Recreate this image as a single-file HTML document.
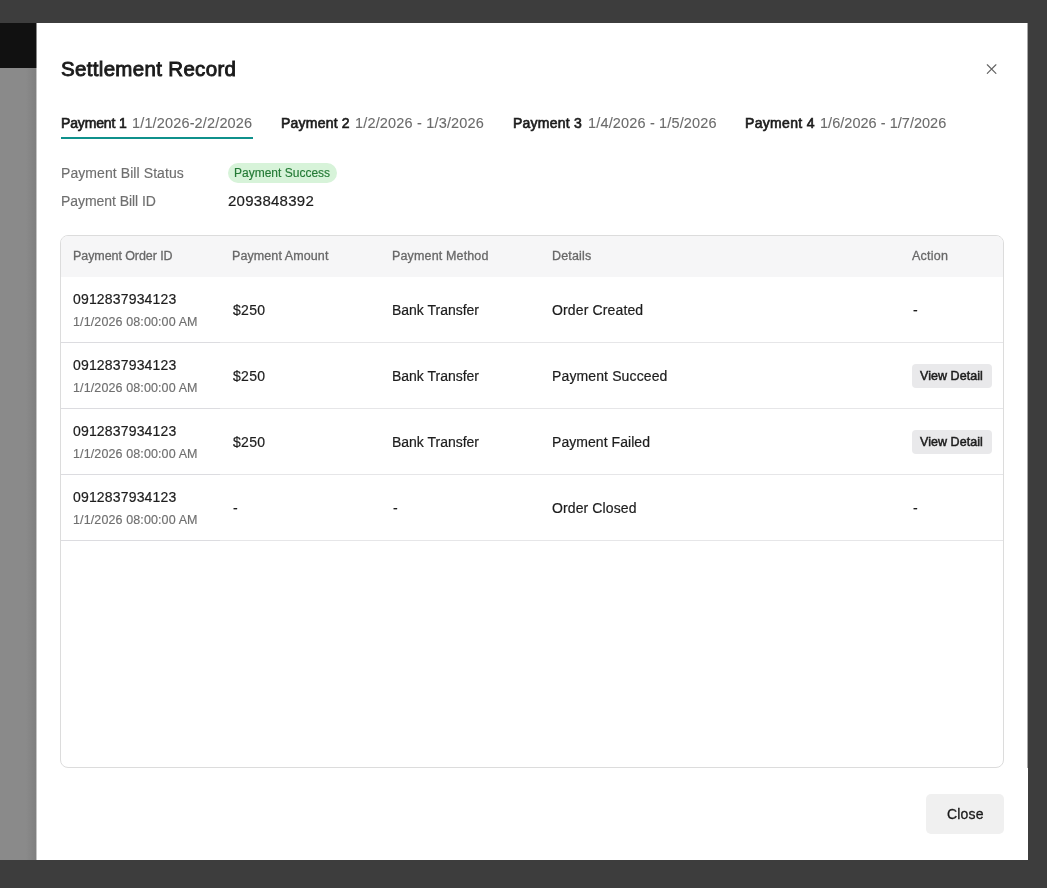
<!DOCTYPE html>
<html><head><meta charset="utf-8">
<style>
html,body{margin:0;padding:0;}
body{width:1047px;height:888px;position:relative;overflow:hidden;background:#3d3d3d;font-family:"Liberation Sans",sans-serif;}
.blk{position:absolute;left:0;top:23px;width:37px;height:45px;background:#111111;}
.gry{position:absolute;left:0;top:68px;width:37px;height:792px;background:linear-gradient(90deg,#8a8a8a 0,#8a8a8a 70%,#7e7e7e 100%);}
.modal{position:absolute;left:37px;top:23px;width:991px;height:837px;background:#ffffff;}
.t{position:absolute;white-space:nowrap;will-change:transform;}
.uline{position:absolute;left:60.5px;top:137.2px;width:192.7px;height:2.3px;background:#0f918c;}
.badge{position:absolute;left:228px;top:163px;width:109px;height:20px;border-radius:10px;background:#d7f3d9;}
.table{position:absolute;left:60px;top:235px;width:944px;height:533px;box-sizing:border-box;border:1px solid #dcdcdc;border-radius:8px;overflow:hidden;}
.thead{position:absolute;left:0;top:0;width:100%;height:41px;background:#f6f6f7;}
.div{position:absolute;left:61px;width:942px;height:1.3px;background:#e6e6e8;}
.div2{position:absolute;left:61px;width:159px;height:1.3px;background:#dcdce0;}
.vbtn{position:absolute;left:912px;width:80px;height:24px;border-radius:4px;background:#e9e9eb;}
.cbtn{position:absolute;left:926px;top:794px;width:78px;height:40px;border-radius:5px;background:#f0f0f0;}
.x{position:absolute;left:984px;top:61px;width:15px;height:15px;}
.edgeL{position:absolute;left:36px;top:23px;width:1px;height:837px;background:linear-gradient(#888 0,#888 45px,#c4c4c4 45px);}
.edgeR{position:absolute;left:1027px;top:23px;width:1px;height:745px;background:#a8a8a8;}
</style></head><body>
<div class="blk"></div><div class="gry"></div>
<div class="modal"></div><div class="edgeL"></div><div class="edgeR"></div>
<svg class="x" viewBox="0 0 15 15"><path d="M3.3 3.75 L11.9 12.35 M11.9 3.75 L3.3 12.35" stroke="#636363" stroke-width="1.15" stroke-linecap="round"/></svg>
<div class="uline"></div>
<div class="badge"></div>
<div class="table"><div class="thead"></div></div>
<div class="div" style="top:342px"></div><div class="div2" style="top:342px"></div><div class="div" style="top:408px"></div><div class="div2" style="top:408px"></div><div class="div" style="top:474px"></div><div class="div2" style="top:474px"></div><div class="div" style="top:540px"></div><div class="div2" style="top:540px"></div>
<div class="cbtn"></div>
<div class="t" id="t0" style="left:61.05px;top:59px;font-size:20.5px;line-height:20.5px;letter-spacing:0.324px;color:#1a1a1a;font-weight:400;-webkit-text-stroke:0.9px #1a1a1a;">Settlement Record</div><div class="t" id="t1" style="left:60.96px;top:116px;font-size:14px;line-height:14px;letter-spacing:-0.151px;color:#1c1c1c;font-weight:400;-webkit-text-stroke:0.65px #1c1c1c;">Payment 1</div><div class="t" id="t2" style="left:131.57px;top:116px;font-size:14.5px;line-height:14.5px;letter-spacing:0.149px;color:#6b6b6b;font-weight:400;-webkit-text-stroke:0.1px #6b6b6b;">1/1/2026-2/2/2026</div><div class="t" id="t3" style="left:281.46px;top:116px;font-size:14px;line-height:14px;letter-spacing:0.216px;color:#1c1c1c;font-weight:400;-webkit-text-stroke:0.65px #1c1c1c;">Payment 2</div><div class="t" id="t4" style="left:355.13px;top:116px;font-size:14.5px;line-height:14.5px;letter-spacing:0.171px;color:#6b6b6b;font-weight:400;-webkit-text-stroke:0.1px #6b6b6b;">1/2/2026 - 1/3/2026</div><div class="t" id="t5" style="left:513.08px;top:116px;font-size:14px;line-height:14px;letter-spacing:0.231px;color:#1c1c1c;font-weight:400;-webkit-text-stroke:0.65px #1c1c1c;">Payment 3</div><div class="t" id="t6" style="left:587.51px;top:116px;font-size:14.5px;line-height:14.5px;letter-spacing:0.157px;color:#6b6b6b;font-weight:400;-webkit-text-stroke:0.1px #6b6b6b;">1/4/2026 - 1/5/2026</div><div class="t" id="t7" style="left:745.08px;top:116px;font-size:14px;line-height:14px;letter-spacing:0.319px;color:#1c1c1c;font-weight:400;-webkit-text-stroke:0.65px #1c1c1c;">Payment 4</div><div class="t" id="t8" style="left:819.69px;top:116px;font-size:14.5px;line-height:14.5px;letter-spacing:0.028px;color:#6b6b6b;font-weight:400;-webkit-text-stroke:0.1px #6b6b6b;">1/6/2026 - 1/7/2026</div><div class="t" id="t9" style="left:60.59px;top:166px;font-size:14px;line-height:14px;letter-spacing:0.078px;color:#6f6f6f;font-weight:400;-webkit-text-stroke:0.15px #6f6f6f;">Payment Bill Status</div><div class="t" id="t10" style="left:60.59px;top:194px;font-size:14px;line-height:14px;letter-spacing:-0.053px;color:#6f6f6f;font-weight:400;-webkit-text-stroke:0.15px #6f6f6f;">Payment Bill ID</div><div class="t" id="t11" style="left:234.42px;top:167px;font-size:12px;line-height:12px;letter-spacing:0.005px;color:#247a35;font-weight:400;-webkit-text-stroke:0.15px #247a35;">Payment Success</div><div class="t" id="t12" style="left:228.49px;top:193px;font-size:15px;line-height:15px;letter-spacing:0.260px;color:#1d1d1d;font-weight:400;-webkit-text-stroke:0.2px #1d1d1d;">2093848392</div><div class="t" id="t13" style="left:72.52px;top:250px;font-size:12.5px;line-height:12.5px;letter-spacing:-0.076px;color:#686868;font-weight:400;-webkit-text-stroke:0.3px #686868;">Payment Order ID</div><div class="t" id="t14" style="left:232.02px;top:250px;font-size:12.5px;line-height:12.5px;letter-spacing:0.090px;color:#686868;font-weight:400;-webkit-text-stroke:0.3px #686868;">Payment Amount</div><div class="t" id="t15" style="left:392.08px;top:250px;font-size:12.5px;line-height:12.5px;letter-spacing:0.148px;color:#686868;font-weight:400;-webkit-text-stroke:0.3px #686868;">Payment Method</div><div class="t" id="t16" style="left:551.58px;top:250px;font-size:12.5px;line-height:12.5px;letter-spacing:0.179px;color:#686868;font-weight:400;-webkit-text-stroke:0.3px #686868;">Details</div><div class="t" id="t17" style="left:912.26px;top:250px;font-size:12.5px;line-height:12.5px;letter-spacing:0.247px;color:#686868;font-weight:400;-webkit-text-stroke:0.3px #686868;">Action</div><div class="t" id="t18" style="left:72.89px;top:292px;font-size:14px;line-height:14px;letter-spacing:0.168px;color:#1d1d1d;font-weight:400;-webkit-text-stroke:0.2px #1d1d1d;">0912837934123</div><div class="t" id="t19" style="left:72.58px;top:316px;font-size:12.5px;line-height:12.5px;letter-spacing:0.115px;color:#6f6f6f;font-weight:400;-webkit-text-stroke:0.15px #6f6f6f;">1/1/2026 08:00:00 AM</div><div class="t" id="t20" style="left:232.94px;top:303px;font-size:14px;line-height:14px;letter-spacing:0.338px;color:#1d1d1d;font-weight:400;-webkit-text-stroke:0.2px #1d1d1d;">$250</div><div class="t" id="t21" style="left:392.05px;top:303px;font-size:14px;line-height:14px;letter-spacing:-0.012px;color:#1d1d1d;font-weight:400;-webkit-text-stroke:0.2px #1d1d1d;">Bank Transfer</div><div class="t" id="t22" style="left:552.12px;top:303px;font-size:14px;line-height:14px;letter-spacing:0.137px;color:#1d1d1d;font-weight:400;-webkit-text-stroke:0.2px #1d1d1d;">Order Created</div><div class="t" id="t23" style="left:913.10px;top:303px;font-size:14px;line-height:14px;letter-spacing:0.000px;color:#1d1d1d;font-weight:400;-webkit-text-stroke:0.2px #1d1d1d;">-</div><div class="t" id="t24" style="left:72.89px;top:358px;font-size:14px;line-height:14px;letter-spacing:0.168px;color:#1d1d1d;font-weight:400;-webkit-text-stroke:0.2px #1d1d1d;">0912837934123</div><div class="t" id="t25" style="left:72.58px;top:382px;font-size:12.5px;line-height:12.5px;letter-spacing:0.115px;color:#6f6f6f;font-weight:400;-webkit-text-stroke:0.15px #6f6f6f;">1/1/2026 08:00:00 AM</div><div class="t" id="t26" style="left:232.94px;top:369px;font-size:14px;line-height:14px;letter-spacing:0.338px;color:#1d1d1d;font-weight:400;-webkit-text-stroke:0.2px #1d1d1d;">$250</div><div class="t" id="t27" style="left:392.05px;top:369px;font-size:14px;line-height:14px;letter-spacing:-0.012px;color:#1d1d1d;font-weight:400;-webkit-text-stroke:0.2px #1d1d1d;">Bank Transfer</div><div class="t" id="t28" style="left:551.94px;top:369px;font-size:14px;line-height:14px;letter-spacing:0.127px;color:#1d1d1d;font-weight:400;-webkit-text-stroke:0.2px #1d1d1d;">Payment Succeed</div><div class="vbtn" style="top:364px"></div><div class="t" id="t29" style="left:920.36px;top:370px;font-size:12.5px;line-height:12.5px;letter-spacing:0.050px;color:#1c1c1c;font-weight:400;-webkit-text-stroke:0.5px #1c1c1c;">View Detail</div><div class="t" id="t30" style="left:72.89px;top:424px;font-size:14px;line-height:14px;letter-spacing:0.168px;color:#1d1d1d;font-weight:400;-webkit-text-stroke:0.2px #1d1d1d;">0912837934123</div><div class="t" id="t31" style="left:72.58px;top:448px;font-size:12.5px;line-height:12.5px;letter-spacing:0.115px;color:#6f6f6f;font-weight:400;-webkit-text-stroke:0.15px #6f6f6f;">1/1/2026 08:00:00 AM</div><div class="t" id="t32" style="left:232.94px;top:435px;font-size:14px;line-height:14px;letter-spacing:0.338px;color:#1d1d1d;font-weight:400;-webkit-text-stroke:0.2px #1d1d1d;">$250</div><div class="t" id="t33" style="left:392.05px;top:435px;font-size:14px;line-height:14px;letter-spacing:-0.012px;color:#1d1d1d;font-weight:400;-webkit-text-stroke:0.2px #1d1d1d;">Bank Transfer</div><div class="t" id="t34" style="left:551.94px;top:435px;font-size:14px;line-height:14px;letter-spacing:0.053px;color:#1d1d1d;font-weight:400;-webkit-text-stroke:0.2px #1d1d1d;">Payment Failed</div><div class="vbtn" style="top:430px"></div><div class="t" id="t35" style="left:920.36px;top:436px;font-size:12.5px;line-height:12.5px;letter-spacing:0.050px;color:#1c1c1c;font-weight:400;-webkit-text-stroke:0.5px #1c1c1c;">View Detail</div><div class="t" id="t36" style="left:72.89px;top:490px;font-size:14px;line-height:14px;letter-spacing:0.168px;color:#1d1d1d;font-weight:400;-webkit-text-stroke:0.2px #1d1d1d;">0912837934123</div><div class="t" id="t37" style="left:72.58px;top:514px;font-size:12.5px;line-height:12.5px;letter-spacing:0.115px;color:#6f6f6f;font-weight:400;-webkit-text-stroke:0.15px #6f6f6f;">1/1/2026 08:00:00 AM</div><div class="t" id="t38" style="left:233.10px;top:501px;font-size:14px;line-height:14px;letter-spacing:0.000px;color:#1d1d1d;font-weight:400;-webkit-text-stroke:0.2px #1d1d1d;">-</div><div class="t" id="t39" style="left:393.10px;top:501px;font-size:14px;line-height:14px;letter-spacing:0.000px;color:#1d1d1d;font-weight:400;-webkit-text-stroke:0.2px #1d1d1d;">-</div><div class="t" id="t40" style="left:552.12px;top:501px;font-size:14px;line-height:14px;letter-spacing:0.116px;color:#1d1d1d;font-weight:400;-webkit-text-stroke:0.2px #1d1d1d;">Order Closed</div><div class="t" id="t41" style="left:913.10px;top:501px;font-size:14px;line-height:14px;letter-spacing:0.000px;color:#1d1d1d;font-weight:400;-webkit-text-stroke:0.2px #1d1d1d;">-</div>
<div class="t" id="t42" style="left:946.78px;top:807px;font-size:14px;line-height:14px;letter-spacing:0.177px;color:#1a1a1a;font-weight:400;-webkit-text-stroke:0.3px #1a1a1a;">Close</div>
</body></html>
